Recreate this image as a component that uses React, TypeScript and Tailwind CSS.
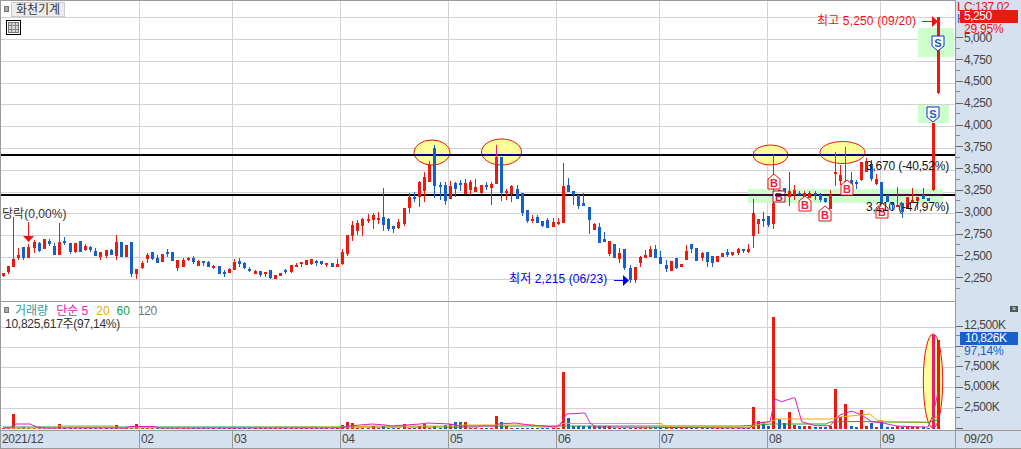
import React from 'react';

type Candle = [string, number, number, number?, number?];

const RED = '#ec1a0e';
const BLUE = '#1560cc';
const PINK = '#e81c6c';

// values read off the chart at 3x, each run has its own y origin
const RUN_A: Candle[] = [
  ['r', 370, 378, 370, 381], ['r', 348, 366, 348, 371], ['r', 327, 351, 200, 351], ['r', 315, 325, 294, 330],
  ['b', 291, 325, 291, 330], ['r', 291, 324, 282, 324], ['r', 276, 294, 270, 309], ['b', 279, 303, 276, 306],
  ['r', 267, 297], ['b', 273, 282, 267, 288], ['b', 288, 315, 278, 315], ['r', 276, 315, 219, 315],
  ['b', 273, 279, 261, 285], ['b', 279, 306, 279, 312], ['r', 279, 306, 279, 309], ['b', 273, 306],
  ['r', 288, 300, 282, 303], ['b', 291, 300, 288, 306], ['b', 303, 318, 294, 318], ['r', 306, 321, 306, 330],
  ['r', 300, 318, 300, 324], ['b', 299, 315, 297, 315], ['r', 276, 318, 255, 330], ['b', 276, 321],
  ['r', 285, 321], ['b', 276, 372, 276, 381], ['r', 357, 372, 357, 387], ['r', 339, 354, 333, 357],
  ['r', 315, 327, 309, 339], ['b', 306, 327, 306, 330], ['b', 324, 339, 315, 339], ['r', 312, 336],
  ['b', 306, 309, 297, 321], ['b', 306, 333], ['r', 330, 354, 330, 363], ['r', 330, 351, 324, 351],
  ['r', 323, 330, 321, 333], ['b', 324, 336, 318, 342], ['r', 333, 348, 330, 348], ['b', 333, 336, 333, 348],
  ['b', 336, 351, 333, 351], ['r', 348, 354, 345, 357], ['b', 348, 372], ['b', 366, 372, 360, 381],
  ['r', 357, 369, 354, 369], ['r', 336, 360, 327, 360], ['b', 333, 342, 324, 351], ['b', 339, 354, 336, 357],
  ['b', 357, 363, 350, 366], ['r', 363, 372, 360, 372], ['b', 363, 375, 363, 381], ['r', 366, 372, 366, 381],
  ['b', 360, 384, 360, 387], ['r', 375, 387], ['r', 369, 378], ['b', 361, 366, 357, 372],
  ['r', 345, 366, 345, 369], ['r', 345, 348, 339, 351], ['r', 336, 342, 336, 351], ['r', 330, 345],
  ['r', 327, 342, 327, 345], ['b', 333, 339, 330, 348], ['b', 333, 342, 333, 345], ['r', 339, 345, 339, 351],
  ['b', 339, 351], ['r', 342, 351, 327, 351],
];

const RUN_B: Candle[] = [
  ['r', 366, 402, 358, 405], ['r', 315, 372, 315, 378], ['r', 285, 318, 273, 333], ['r', 279, 303, 270, 315],
  ['r', 267, 288, 264, 318], ['r', 267, 273, 252, 279], ['r', 255, 270, 250, 297], ['r', 264, 270, 246, 282],
  ['b', 261, 285, 174, 303], ['b', 267, 297, 264, 303], ['b', 288, 297, 288, 309], ['r', 276, 294, 267, 297],
  ['r', 234, 282, 234, 288], ['r', 201, 234, 189, 249], ['b', 201, 207, 186, 216], ['r', 156, 201, 153, 231],
  ['r', 141, 183, 126, 216], ['r', 105, 156, 93, 156], ['b', 54, 168, 45, 204], ['b', 165, 171, 156, 210],
  ['b', 165, 213, 156, 225], ['r', 168, 207, 153, 207], ['b', 159, 177, 156, 201], ['b', 159, 162, 150, 183],
  ['r', 159, 192, 147, 192], ['r', 156, 180, 150, 195], ['r', 171, 186, 147, 186], ['r', 165, 189, 165, 192],
  ['b', 165, 168, 156, 180], ['r', 162, 174, 156, 225], ['r', 81, 162, 45, 162], ['b', 81, 189, 81, 213],
  ['r', 183, 189, 177, 210], ['r', 168, 192, 165, 216], ['b', 177, 207, 165, 207], ['b', 189, 249, 189, 258],
  ['b', 240, 273, 240, 279], ['r', 267, 273, 255, 279], ['b', 261, 279, 255, 279], ['b', 273, 288, 273, 291],
  ['b', 270, 294, 264, 294], ['r', 276, 291, 264, 291], ['r', 276, 279, 264, 285], ['r', 168, 279, 99, 279],
  ['b', 165, 186, 144, 186], ['b', 183, 195, 183, 225], ['b', 195, 228, 195, 237], ['b', 219, 228, 189, 228],
  ['b', 231, 270, 231, 312], ['r', 282, 300, 279, 300], ['b', 291, 339, 279, 339], ['b', 327, 336, 306, 336],
  ['r', 333, 372, 333, 378], ['b', 342, 384], ['r', 369, 387, 354, 399], ['b', 357, 414, 357, 420],
  ['b', 414, 450, 405, 459], ['r', 411, 450, 411, 459], ['r', 381, 399, 378, 411], ['r', 375, 384, 360, 384],
  ['r', 357, 381, 348, 381], ['b', 357, 384, 345, 384], ['b', 381, 402, 363, 402], ['b', 405, 417, 390, 426],
  ['r', 393, 423], ['b', 384, 414, 384, 417],
  ['r', 402, 411], ['r', 363, 390, 345, 390], ['b', 342, 357, 342, 369], ['b', 354, 393],
  ['r', 369, 384, 366, 393], ['b', 366, 396, 366, 411], ['b', 378, 399, 378, 411], ['r', 378, 396],
  ['r', 369, 381], ['b', 366, 375, 357, 381], ['r', 366, 375, 366, 378], ['r', 357, 369, 354, 375],
  ['b', 357, 363, 357, 369], ['r', 357, 366, 342, 369], ['r', 249, 318, 207, 354], ['r', 267, 282, 267, 312],
  ['b', 267, 273, 246, 291], ['b', 258, 285, 258, 291], ['r', 219, 282, 75, 297], ['b', 180, 210],
  ['b', 175, 190], ['r', 183, 200, 126, 228], ['r', 180, 195, 165, 210], ['b', 190, 195, 183, 195],
  ['r', 190, 200, 183, 200], ['r', 190, 205, 183, 205], ['b', 190, 195, 183, 210], ['b', 195, 210, 188, 215],
  ['b', 205, 215, 205, 220], ['r', 195, 238, 180, 238], ['r', 126, 132, 66, 168], ['r', 135, 153, 105, 165],
  ['r', 153, 159, 50, 159], ['b', 150, 165, 126, 165], ['b', 156, 160, 150, 177], ['r', 96, 150, 96, 153],
  ['r', 93, 125, 84, 125], ['b', 102, 147, 90, 153], ['r', 147, 162, 132, 165], ['b', 156, 222],
  ['b', 195, 215], ['b', 215, 225, 215, 243], ['r', 225, 231, 171, 231], ['b', 220, 245, 220, 264],
  ['r', 201, 236], ['r', 210, 218, 174, 218], ['r', 201, 213, 201, 240], ['b', 195, 207, 174, 207],
  ['b', 205, 212], ['r', -21, 180, -21, 183],
];

const toPx = (origin: number) => ([c, t, b, wt, wb]: Candle) => ({
  red: c === 'r',
  top: origin + t / 3,
  bottom: origin + b / 3,
  wickTop: origin + (wt ?? t) / 3,
  wickBottom: origin + (wb ?? b) / 3,
});

const candles = [
  ...RUN_A.map(toPx(150)),
  ...RUN_B.map(toPx(130)),
  { red: true, top: 17, bottom: 93, wickTop: 17, wickBottom: 94 },
];

const xOf = (i: number) => Math.floor(3.3 + 5.138 * i);

const PRICE_GRID = [17, 39, 61, 83, 104, 126, 148, 170, 192, 213, 235, 257, 279];
const VOLUME_GRID = [327, 347, 367, 387, 408];
const MONTH_LINES = [139, 232, 340, 448, 556, 659, 767, 880];
const TOPS = [
  { cx: 432, cy: 152.5, rx: 18, ry: 12.5 },
  { cx: 501.5, cy: 152, rx: 20, ry: 13 },
  { cx: 770.5, cy: 155, rx: 17.5, ry: 10 },
  { cx: 842.5, cy: 152.5, rx: 22.5, ry: 11 },
];
const BUY_MARKS = [
  { x: 774, y: 174 },
  { x: 805, y: 196 },
  { x: 825, y: 206 },
  { x: 847, y: 180 },
  { x: 882, y: 203 },
];
const SELL_MARKS = [
  { x: 938, y: 36 },
  { x: 933, y: 107 },
];
const PRICE_LABELS = ['5,000', '4,750', '4,500', '4,250', '4,000', '3,750', '3,500', '3,250', '3,000', '2,750', '2,500', '2,250'];
const VOLUME_LABELS = ['12,500K', '', '7,500K', '5,000K', '2,500K'];
const MONTHS = [
  { label: '02', w: 'w-[93px]' },
  { label: '03', w: 'w-[108px]' },
  { label: '04', w: 'w-[108px]' },
  { label: '05', w: 'w-[108px]' },
  { label: '06', w: 'w-[103px]' },
  { label: '07', w: 'w-[108px]' },
  { label: '08', w: 'w-[113px]' },
  { label: '09', w: 'w-[75px]' },
];

const VOLUME: Record<number, number> = {
  2: 15, 4: 2, 11: 5, 22: 4, 26: 5, 66: 4, 67: 7, 68: 6, 72: 3, 74: 3, 78: 5, 81: 3, 82: 5, 84: 3,
  86: 4, 87: 5, 88: 7, 89: 7, 90: 7, 96: 13, 97: 7, 98: 3, 109: 57, 110: 11, 111: 3, 112: 3, 113: 3,
  114: 3, 115: 3, 116: 3, 117: 3, 118: 3,
  146: 22, 147: 8, 148: 7, 149: 3, 150: 112, 151: 10, 152: 6, 153: 17, 154: 4, 155: 3, 156: 3, 157: 3,
  158: 2, 159: 2, 160: 2, 161: 3, 162: 40, 163: 12, 164: 25, 165: 3, 166: 2, 167: 19, 168: 3, 169: 6,
  170: 2, 171: 7, 172: 2, 173: 2, 174: 3, 175: 2, 176: 2, 177: 2, 178: 2, 179: 2, 181: 94, 182: 89,
};

const MAGENTA_LINE = '3,428 10,428 16,424 30,424 37,427 45,428 125,428 130,426.5 155,426.5 160,428 340,428 350,426 360,425 372,424 385,425 392,426 420,424 428,423 450,424 460,426 495,426 498,424 515,423 522,424 530,425 556,427 560,425 566.7,414 585,413 590,423 596,427 750,428 755,423 770,421.7 775,399 781.7,401.7 793,398 795,398 801.7,421.7 815,425.7 830,425.7 840,415 851.7,411 861.7,415 871.7,421.7 883,423 896.7,426 913,426.7 928,427 933,415 938,392';
const ORANGE_LINE = '3,428 57,428 58,426 113,426 118,428 360,427 365,426 458,426 460,425 535,425 537,427 556,427 560,423.5 661.7,423.5 663,427 750,427 771.7,421 777,419 831.7,419 840,417 860,415 870,414 877,420 888,421.7 928,422 938,416';
const GREEN_LINE = '3,427 478,427 480,426 741,426 771,424 826,424 830,422 860,421.5 928,422.5 938,420';

const CandleBar: React.FC<{ i: number; fill?: string }> = ({ i, fill }) => {
  const c = candles[i];
  const color = fill ?? (c.red ? RED : BLUE);
  const x = xOf(i);
  return (
    <g fill={color}>
      <rect x={x} y={c.wickTop} width={1} height={Math.max(c.wickBottom - c.wickTop, 1)} />
      <rect x={x - 1} y={c.top} width={3} height={Math.max(c.bottom - c.top, 1.5)} />
    </g>
  );
};

const BuyMark: React.FC<{ x: number; y: number }> = ({ x, y }) => (
  <g>
    <path d={`M${x - 6} ${y + 15}V${y + 5}L${x} ${y}L${x + 6} ${y + 5}V${y + 15}Z`} fill="#fff" stroke="#ee1111" />
    <text x={x} y={y + 13} textAnchor="middle" fontSize={11} fontWeight={700} fill="#ee2040" fontFamily="Liberation Sans">B</text>
  </g>
);

const SellMark: React.FC<{ x: number; y: number }> = ({ x, y }) => (
  <g>
    <path d={`M${x - 6} ${y}H${x + 6}V${y + 10}L${x} ${y + 15}L${x - 6} ${y + 10}Z`} fill="#fff" stroke="#2222dd" />
    <text x={x} y={y + 11} textAnchor="middle" fontSize={11} fontWeight={700} fill="#1560cc" fontFamily="Liberation Sans">S</text>
  </g>
);

const PricePane = () => (
  <svg className="absolute inset-0" width={954} height={300} viewBox="1 1 954 300" shapeRendering="crispEdges">
    <defs>
      <clipPath id="tops">
        {TOPS.map((t) => <ellipse key={t.cx} {...t} />)}
      </clipPath>
    </defs>
    {PRICE_GRID.map((y) => <rect key={y} x={1} y={y} width={954} height={1} fill="#d2d2d2" />)}
    {MONTH_LINES.map((x) => <rect key={x} x={x} y={1} width={1} height={300} fill="#d2d2d2" />)}
    <rect x={918} y={28} width={36} height={29} fill="#ccffcc" />
    <rect x={918} y={105} width={31} height={18} fill="#ccffcc" />
    <rect x={748} y={189} width={195} height={14} fill="#ccffcc" />
    <rect x={1} y={154} width={954} height={2} fill="#000" />
    <rect x={1} y={194} width={954} height={2} fill="#000" />
    <rect x={748} y={194} width={195} height={2} fill="#3c0a3c" />
    <g shapeRendering="auto">
      {TOPS.map((t) => <ellipse key={t.cx} {...t} fill="#ffff99" stroke="#ee1111" strokeWidth={1} />)}
    </g>
    {TOPS.map((t) => <rect key={t.cx} x={t.cx - t.rx} y={154} width={t.rx * 2} height={2} fill="#000080" />)}
    {candles.map((_, i) => <CandleBar key={i} i={i} />)}
    <g clipPath="url(#tops)">
      {candles.map((c, i) => (c.red ? <CandleBar key={i} i={i} fill={PINK} /> : null))}
    </g>
    {/* arrow over the first limit-up day */}
    <rect x={28} y={222} width={1} height={14} fill="#ee1111" />
    <path d="M23 236H34L28.5 242Z" fill="#ee1111" shapeRendering="auto" />
    <g shapeRendering="auto">
      {BUY_MARKS.map((m) => <BuyMark key={m.x} {...m} />)}
      {SELL_MARKS.map((m) => <SellMark key={m.x} {...m} />)}
      <path d="M779 191H785V202H773V191Z" fill="#fff" stroke="#a01030" />
      <text x={779} y={201} textAnchor="middle" fontSize={11} fontWeight={700} fill="#c02040" fontFamily="Liberation Sans">B</text>
    </g>
    <rect x={775} y={194} width={12} height={2} fill="#3c0a3c" />
    <rect x={922} y={21} width={10} height={1} fill="#ee1111" />
    <path d="M932 16V27L938 21.5Z" fill="#ee1111" shapeRendering="auto" />
    <rect x={614} y={280} width={9} height={1} fill="#0000ee" />
    <path d="M623 275V286L629 280.5Z" fill="#0000ee" shapeRendering="auto" />
  </svg>
);

const VolumePane = () => (
  <svg className="absolute inset-0" width={954} height={128} viewBox="1 302 954 128" shapeRendering="crispEdges">
    {VOLUME_GRID.map((y) => <rect key={y} x={1} y={y} width={954} height={1} fill="#d2d2d2" />)}
    {MONTH_LINES.map((x) => <rect key={x} x={x} y={302} width={1} height={128} fill="#d2d2d2" />)}
    <g shapeRendering="auto">
      <ellipse cx={933} cy={381} rx={9.7} ry={47} fill="#ffff99" stroke="#ee1111" />
    </g>
    {candles.map((c, i) => {
      const h = VOLUME[i] ?? 1;
      const fill = i === 181 ? PINK : c.red ? RED : BLUE;
      return <rect key={i} x={xOf(i) - 1} y={429 - h} width={3} height={h} fill={fill} />;
    })}
    <g fill="none" strokeWidth={1} shapeRendering="auto">
      <polyline points={GREEN_LINE} stroke="#16a040" />
      <polyline points={ORANGE_LINE} stroke="#f0a800" />
      <polyline points={MAGENTA_LINE} stroke="#e020b8" />
    </g>
  </svg>
);

const Label: React.FC<{ className: string; children: React.ReactNode }> = ({ className, children }) => (
  <span className={`absolute text-[12px] leading-[12px] whitespace-nowrap ${className}`}>{children}</span>
);

const Grip: React.FC<{ className?: string }> = ({ className = '' }) => (
  <span className={`absolute w-[5px] h-[6px] bg-[#aaaaaa] border border-[#777] ${className}`} />
);

export default function App() {
  return (
    <div className="relative w-[1021px] h-[449px] flex flex-col overflow-hidden bg-[#d6e1ef] [font-family:'Liberation_Sans','Noto_Sans_CJK_KR',sans-serif]">
      {/* price pane */}
      <div className="flex h-[301px] shrink-0">
        <div className="relative w-[956px] border-t border-l border-r border-[#999999] bg-white">
          <PricePane />
          <Grip className="left-[3px] top-[5px]" />
          <div className="absolute left-[10px] top-[1px] w-[54px] h-[15px] bg-[#ececec] border border-[#cccccc] flex items-center justify-center text-[12px] text-[#333] leading-none">
            화천기계
          </div>
          <div className="absolute left-[5px] top-[19px] w-[15px] h-[15px] border border-black bg-white p-px">
            <div className="w-full h-full border border-[#777] grid grid-cols-3 grid-rows-3 gap-px bg-[#888]">
              {Array.from({ length: 9 }).map((_, i) => <span key={i} className="bg-[#d8d8d8]" />)}
            </div>
          </div>
          <Label className="left-[1px] top-[207px] tracking-[0.05px] text-[#333]">당락(0,00%)</Label>
          <Label className="left-[816px] top-[14px] tracking-[0.15px] text-[#ee1111]">최고 5,250 (09/20)</Label>
          <Label className="left-[508px] top-[272px] tracking-[0.1px] text-[#0000ee]">최저 2,215 (06/23)</Label>
          <Label className="left-[865px] top-[159px] tracking-[-0.2px] text-[#111]">3,670 (-40,52%)</Label>
          <Label className="left-[865px] top-[200px] tracking-[-0.2px] text-[#111]">3,210 (-47,97%)</Label>
        </div>
        <div className="relative flex-1 flex flex-col pt-[27px]">
          {PRICE_LABELS.map((p) => (
            <div key={p} className="relative flex items-center h-[21.8px] shrink-0 gap-px text-[12px] leading-none tracking-[-0.45px] text-[#444]">
              <span className="w-[7px] h-px bg-[#666]" />
              <span>{p}</span>
              <span className="absolute left-0 bottom-0 w-[4px] h-px bg-[#888]" />
            </div>
          ))}
          <Label className="left-[1px] top-[1px] tracking-[-0.45px] text-[#ee1111]">L</Label>
          <Label className="left-[8px] top-[1px] tracking-[-0.45px] text-[#ee1111]">C:137.02</Label>
          <Label className="left-[1px] top-[13px] tracking-[-0.45px] text-[#1560cc]">H</Label>
          <div className="absolute left-[4px] top-[10px] w-[58px] h-[13px] bg-[#ec1a0e] text-white text-[12px] leading-[13px] tracking-[-0.45px] pl-[4px]">5,250</div>
          <Label className="left-[8px] top-[23px] tracking-[-0.2px] text-[#ee1111]">29,95%</Label>
        </div>
      </div>

      {/* volume pane */}
      <div className="flex h-[129px] shrink-0">
        <div className="relative w-[956px] border-t border-l border-r border-[#999999] bg-white">
          <VolumePane />
          <Grip className="left-[3px] top-[5px]" />
          <div className="absolute left-[14px] top-[3px] flex text-[12px] leading-[12px] whitespace-nowrap">
            <span className="text-[#2a9d9d] mr-[8px]">거래량</span>
            <span className="text-[#e020b8] mr-[8px]">단순 5</span>
            <span className="text-[#f0a800] mr-[7px]">20</span>
            <span className="text-[#10a040] mr-[8px]">60</span>
            <span className="text-[#777] tracking-[-0.45px]">120</span>
          </div>
          <Label className="left-[4px] top-[16px] tracking-[-0.25px] text-[#333]">10,825,617주(97,14%)</Label>
        </div>
        <div className="relative flex-1 flex flex-col pt-[15px]">
          {VOLUME_LABELS.map((v, i) => (
            <div key={i} className="relative flex items-center h-[20.4px] shrink-0 gap-px text-[12px] leading-none tracking-[-0.45px] text-[#444]">
              <span className="w-[7px] h-px bg-[#666]" />
              <span className="-translate-y-[1px]">{v}</span>
              <span className="absolute left-0 bottom-0 w-[4px] h-px bg-[#888]" />
            </div>
          ))}
          <span className="w-[7px] h-px bg-[#666] mt-[10px]" />
          <span className="absolute left-[54px] top-[5px] w-[8px] h-[6px] bg-[#555] text-white text-[7px] leading-[6px] text-center">×</span>
          <div className="absolute left-[4px] top-[31px] w-[58px] h-[13px] bg-[#1560cc] text-white text-[12px] leading-[13px] tracking-[-0.45px] pl-[5px]">10,826K</div>
          <Label className="left-[8px] top-[44px] tracking-[-0.2px] text-[#1560cc]">97,14%</Label>
        </div>
      </div>

      {/* date axis */}
      <div className="flex flex-1 border-t border-b border-l border-[#999999] text-[12px] leading-none tracking-[-0.3px] text-[#444]">
        <div className="w-[139px] pl-[1px] pt-[2px] border-r border-[#999999]">2021/12</div>
        {MONTHS.map((m) => (
          <div key={m.label} className={`${m.w} pl-[1px] pt-[2px] border-r border-[#999999]`}>{m.label}</div>
        ))}
        <div className="pl-[8px] pt-[2px]">09/20</div>
      </div>
    </div>
  );
}
